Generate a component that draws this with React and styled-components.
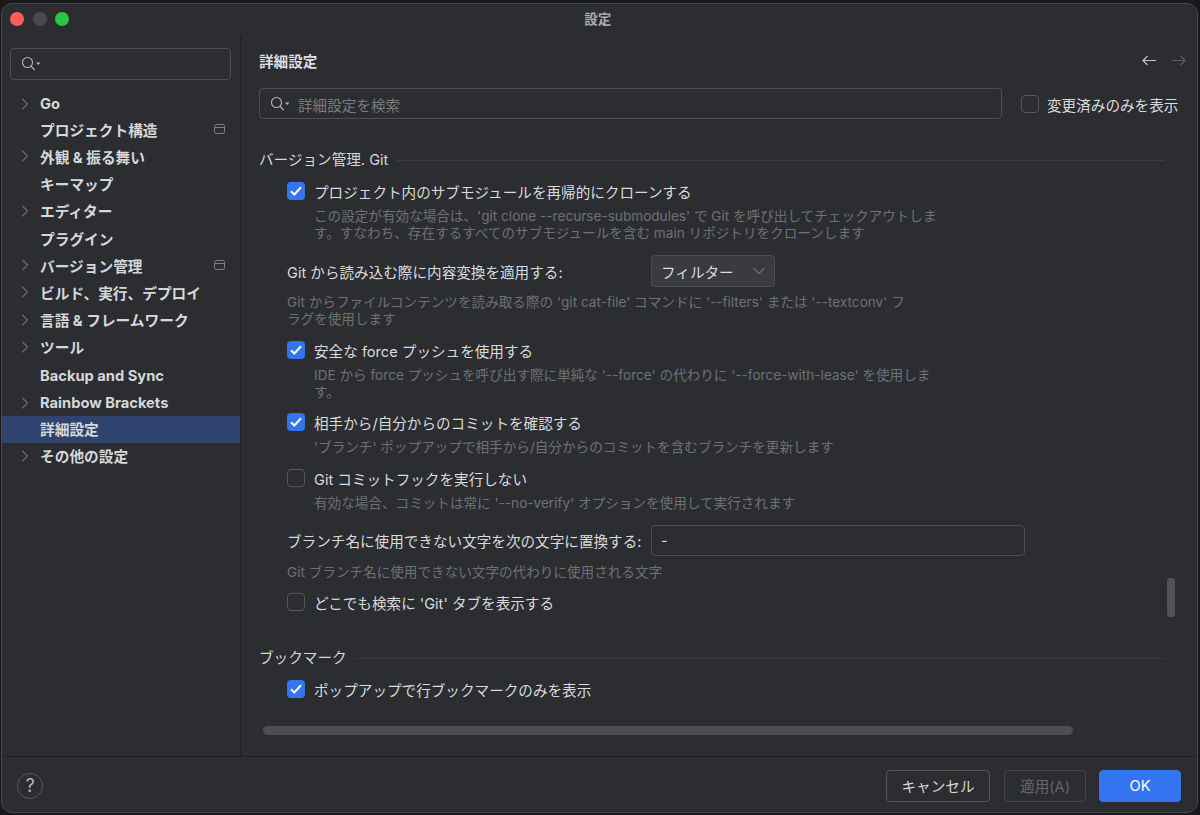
import styled, { createGlobalStyle } from "styled-components";
import { ChevronRight, ChevronDown } from "lucide-react";

const GlobalStyle = createGlobalStyle`
  html, body {
    margin: 0;
    height: 100%;
    background: #19191b;
  }
  body {
    font-family: Inter, "Noto Sans CJK JP", sans-serif;
    color: #dfe1e5;
  }
  * { box-sizing: border-box; }
`;

const Page = styled.div`
  width: 1200px;
  height: 815px;
  padding: 3px 2px 2px 1px;
`;

const Window = styled.div`
  position: relative;
  width: 100%;
  height: 100%;
  background: #2b2d30;
  border: 1px solid #47494d;
  border-radius: 11px;
  display: flex;
  flex-direction: column;
  overflow: hidden;
`;

const TitleBar = styled.div`
  height: 32px;
  flex: none;
  display: flex;
  align-items: center;
  padding: 0 0 2px 8px;
`;

const Light = styled.span`
  width: 14px;
  height: 14px;
  border-radius: 50%;
  margin-right: 8.5px;
  background: ${(p) => p.$color};
`;

const Title = styled.div`
  flex: 1;
  text-align: center;
  font-size: 13.5px;
  font-weight: 700;
  color: #a9abaf;
  margin: -3px 0 0 -79px;
`;

const Body = styled.div`
  flex: 1;
  display: flex;
  min-height: 0;
`;

const Sidebar = styled.aside`
  width: 239px;
  flex: none;
  border-right: 1px solid #1f2022;
  padding-top: 12px;
`;

const SideSearch = styled.div`
  height: 32px;
  margin: 0 9px 10px 8px;
  border: 1px solid #4c4e52;
  border-radius: 4px;
  display: flex;
  align-items: center;
  padding-left: 10px;
`;

/* the CJK fallback sits lower in the line than Inter, so the two kinds of row get different padding */
const TreeRow = styled.div`
  height: 27.2px;
  display: flex;
  align-items: center;
  padding: ${(p) => (p.$latin ? "1px 15px 0 13px" : "0 15px 3px 13px")};
  font-size: 14.7px;
  font-weight: 700;
  color: #d5d7db;
  background: ${(p) => (p.$selected ? "#2e436e" : "transparent")};
`;

const TreeArrow = styled.span`
  width: 25px;
  flex: none;
  display: flex;
  color: #a0a2a6;
`;

const TreeLabel = styled.span`
  flex: 1;
  white-space: nowrap;
`;

const Main = styled.main`
  flex: 1;
  min-width: 0;
  padding: 0 18px;
`;

const HeadRow = styled.div`
  height: 52px;
  display: flex;
  align-items: center;
  justify-content: space-between;
  padding-right: 1px;
`;

const PageTitle = styled.h1`
  margin: -4px 0 0;
  font-size: 14.6px;
  font-weight: 700;
  color: #dcdee2;
`;

const Nav = styled.div`
  display: flex;
  gap: 14px;
  margin: -4px -8px 0 0;
`;

const SearchRow = styled.div`
  display: flex;
  align-items: center;
  height: 31px;
  margin-bottom: 29px;
`;

const SearchBox = styled.div`
  width: 743px;
  height: 31px;
  border: 1px solid #4c4e52;
  border-radius: 4px;
  display: flex;
  align-items: center;
  padding-left: 10px;
  font-size: 14.6px;
  color: #797b80;
`;

const SearchHint = styled.span`
  margin-left: 8px;
  padding-top: 2px;
`;

const ShowChanged = styled.div`
  display: flex;
  align-items: center;
  margin-left: 19px;
  & > span:last-child {
    margin-left: 8px;
    padding-top: 2px;
  }
`;

const Check = styled.span`
  width: 18px;
  height: 18px;
  flex: none;
  border-radius: 4px;
  border: ${(p) => (p.$on ? "none" : "1px solid #56585c")};
  background: ${(p) => (p.$on ? "#3574f0" : "transparent")};
  display: flex;
  align-items: center;
  justify-content: center;
`;

const CheckLabel = styled.span`
  margin-left: 9px;
  font-size: 14.6px;
  color: #d9dbdf;
  white-space: nowrap;
`;

const SectionHead = styled.div`
  display: flex;
  align-items: center;
  width: 906px;
  height: 20px;
  font-size: 14.6px;
  color: #d5d7db;
  margin-top: ${(p) => p.$top || 0}px;
  &::after {
    content: "";
    flex: 1;
    height: 1px;
    margin: 4px 0 0 8px;
    background: #393b3f;
  }
`;

const Section = styled.section`
  padding-left: 28px;
  margin-top: 13px;
`;

const Option = styled.div`
  display: flex;
  align-items: center;
  height: 20px;
  margin-top: ${(p) => p.$top || 0}px;
`;

const Desc = styled.p`
  margin: ${(p) => p.$top || 7}px 0 -1px ${(p) => (p.$flush ? 0 : 27)}px;
  width: 626px;
  font-size: 13.6px;
  line-height: 17px;
  color: #6f7176;
`;

const FieldRow = styled.div`
  display: flex;
  align-items: center;
  margin-top: ${(p) => p.$top || 0}px;
  font-size: 14.6px;
  color: #d9dbdf;
`;

const FieldLabel = styled.span`
  width: 364px;
  flex: none;
  white-space: nowrap;
`;

const Select = styled.div`
  width: 124px;
  height: 32px;
  background: #393b40;
  border: 1px solid #4c4e52;
  border-radius: 4px;
  display: flex;
  align-items: center;
  justify-content: space-between;
  padding: 0 5px 0 9px;
`;

const TextInput = styled.div`
  width: 374px;
  height: 31px;
  border: 1px solid #4c4e52;
  border-radius: 4px;
  display: flex;
  align-items: center;
  padding-left: 9px;
`;

const Footer = styled.footer`
  height: 56px;
  flex: none;
  border-top: 1px solid #1f2022;
  display: flex;
  align-items: center;
  justify-content: space-between;
  padding: 2px 16px 0 15px;
`;

const Help = styled.span`
  width: 26px;
  height: 26px;
  border-radius: 50%;
  border: 1px solid #55575b;
  display: flex;
  align-items: center;
  justify-content: center;
  font-size: 18px;
  color: #b4b6ba;
`;

const Buttons = styled.div`
  display: flex;
`;

const Button = styled.button`
  height: 32px;
  width: ${(p) => p.$w}px;
  margin-left: ${(p) => p.$gap || 0}px;
  padding: 0;
  border-radius: 4px;
  font: inherit;
  font-size: 14.6px;
  border: 1px solid ${(p) => (p.$primary ? "#3574f0" : p.$off ? "#43454a" : "#56585c")};
  background: ${(p) => (p.$primary ? "#3574f0" : "transparent")};
  color: ${(p) => (p.$primary ? "#fff" : p.$off ? "#66686c" : "#d5d7db")};
`;

const ScrollV = styled.div`
  position: absolute;
  left: 1165px;
  top: 574px;
  width: 8px;
  height: 39px;
  border-radius: 3px;
  background: #505256;
`;

const ScrollH = styled.div`
  position: absolute;
  left: 261px;
  top: 722px;
  width: 810px;
  height: 9px;
  border-radius: 5px;
  background: #4c4e52;
`;

const SearchIcon = () => (
  <svg width="20" height="16" viewBox="0 0 20 16" fill="none">
    <circle cx="6.5" cy="6.5" r="5" stroke="#b4b6ba" strokeWidth="1.1" />
    <path d="M10 10.2L13.6 14" stroke="#b4b6ba" strokeWidth="1.2" />
    <path d="M15 6.5h4.4l-2.2 2.4z" fill="#b4b6ba" />
  </svg>
);

const NavArrow = ({ color, flip }) => (
  <svg width="15" height="11" viewBox="0 0 15 11" fill="none">
    <path
      d={flip ? "M1 5.5h13M9.5 1L14 5.5L9.5 10" : "M14 5.5H1M5.5 1L1 5.5L5.5 10"}
      stroke={color}
      strokeWidth="1.2"
    />
  </svg>
);

const TickBox = () => (
  <Check $on>
    <svg width="12" height="10" viewBox="0 0 12 10" fill="none">
      <path d="M1 5.2L4.3 8.5L11 1.2" stroke="#fff" strokeWidth="2" />
    </svg>
  </Check>
);

const SceneIcon = () => (
  <svg width="11" height="10" viewBox="0 0 11 10" fill="none">
    <rect x="0.5" y="0.5" width="10" height="9" rx="2" stroke="#7e8084" />
    <path d="M0.5 3.5h10" stroke="#7e8084" />
  </svg>
);

const tree = [
  { label: "Go", arrow: true, latin: true },
  { label: "プロジェクト構造", scene: true },
  { label: "外観 & 振る舞い", arrow: true },
  { label: "キーマップ" },
  { label: "エディター", arrow: true },
  { label: "プラグイン" },
  { label: "バージョン管理", arrow: true, scene: true },
  { label: "ビルド、実行、デプロイ", arrow: true },
  { label: "言語 & フレームワーク", arrow: true },
  { label: "ツール", arrow: true },
  { label: "Backup and Sync", latin: true },
  { label: "Rainbow Brackets", arrow: true, latin: true },
  { label: "詳細設定", selected: true },
  { label: "その他の設定", arrow: true },
];

const App = () => (
  <>
    <GlobalStyle />
    <Page>
      <Window>
        <TitleBar>
          <Light $color="#ff5f57" />
          <Light $color="#4a4b4d" />
          <Light $color="#28c840" />
          <Title>設定</Title>
        </TitleBar>
        <Body>
          <Sidebar>
            <SideSearch>
              <SearchIcon />
            </SideSearch>
            {tree.map((item) => (
              <TreeRow key={item.label} $selected={item.selected} $latin={item.latin}>
                <TreeArrow>
                  {item.arrow && <ChevronRight size={20} strokeWidth={1.1} />}
                </TreeArrow>
                <TreeLabel>{item.label}</TreeLabel>
                {item.scene && <SceneIcon />}
              </TreeRow>
            ))}
          </Sidebar>
          <Main>
            <HeadRow>
              <PageTitle>詳細設定</PageTitle>
              <Nav>
                <NavArrow color="#c4c6ca" />
                <NavArrow color="#5c5e62" flip />
              </Nav>
            </HeadRow>
            <SearchRow>
              <SearchBox>
                <SearchIcon />
                <SearchHint>詳細設定を検索</SearchHint>
              </SearchBox>
              <ShowChanged>
                <Check />
                <CheckLabel>変更済みのみを表示</CheckLabel>
              </ShowChanged>
            </SearchRow>

            <SectionHead>バージョン管理. Git</SectionHead>
            <Section>
              <Option>
                <TickBox />
                <CheckLabel>プロジェクト内のサブモジュールを再帰的にクローンする</CheckLabel>
              </Option>
              <Desc>
                この設定が有効な場合は、'git clone --recurse-submodules' で Git を呼び出してチェックアウトします。すなわち、存在するすべてのサブモジュールを含む main リポジトリをクローンします
              </Desc>
              <FieldRow $top={14}>
                <FieldLabel>Git から読み込む際に内容変換を適用する:</FieldLabel>
                <Select>
                  フィルター
                  <ChevronDown size={20} strokeWidth={1.1} color="#a0a2a6" />
                </Select>
              </FieldRow>
              <Desc $flush>
                Git からファイルコンテンツを読み取る際の 'git cat-file' コマンドに '--filters' または '--textconv' フラグを使用します
              </Desc>
              <Option $top={13}>
                <TickBox />
                <CheckLabel>安全な force プッシュを使用する</CheckLabel>
              </Option>
              <Desc>
                IDE から force プッシュを呼び出す際に単純な '--force' の代わりに '--force-with-lease' を使用します。
              </Desc>
              <Option $top={12}>
                <TickBox />
                <CheckLabel>相手から/自分からのコミットを確認する</CheckLabel>
              </Option>
              <Desc>'ブランチ' ポップアップで相手から/自分からのコミットを含むブランチを更新します</Desc>
              <Option $top={13}>
                <Check />
                <CheckLabel>Git コミットフックを実行しない</CheckLabel>
              </Option>
              <Desc>有効な場合、コミットは常に '--no-verify' オプションを使用して実行されます</Desc>
              <FieldRow $top={14}>
                <FieldLabel>ブランチ名に使用できない文字を次の文字に置換する:</FieldLabel>
                <TextInput>-</TextInput>
              </FieldRow>
              <Desc $flush $top={8}>Git ブランチ名に使用できない文字の代わりに使用される文字</Desc>
              <Option $top={12}>
                <Check />
                <CheckLabel>どこでも検索に 'Git' タブを表示する</CheckLabel>
              </Option>
            </Section>

            <SectionHead $top={34}>ブックマーク</SectionHead>
            <Section>
              <Option>
                <TickBox />
                <CheckLabel>ポップアップで行ブックマークのみを表示</CheckLabel>
              </Option>
            </Section>
          </Main>
        </Body>
        <Footer>
          <Help>?</Help>
          <Buttons>
            <Button $w={104}>キャンセル</Button>
            <Button $w={82} $off $gap={14}>適用(A)</Button>
            <Button $w={82} $primary $gap={13}>OK</Button>
          </Buttons>
        </Footer>
        <ScrollV />
        <ScrollH />
      </Window>
    </Page>
  </>
);

export default App;
